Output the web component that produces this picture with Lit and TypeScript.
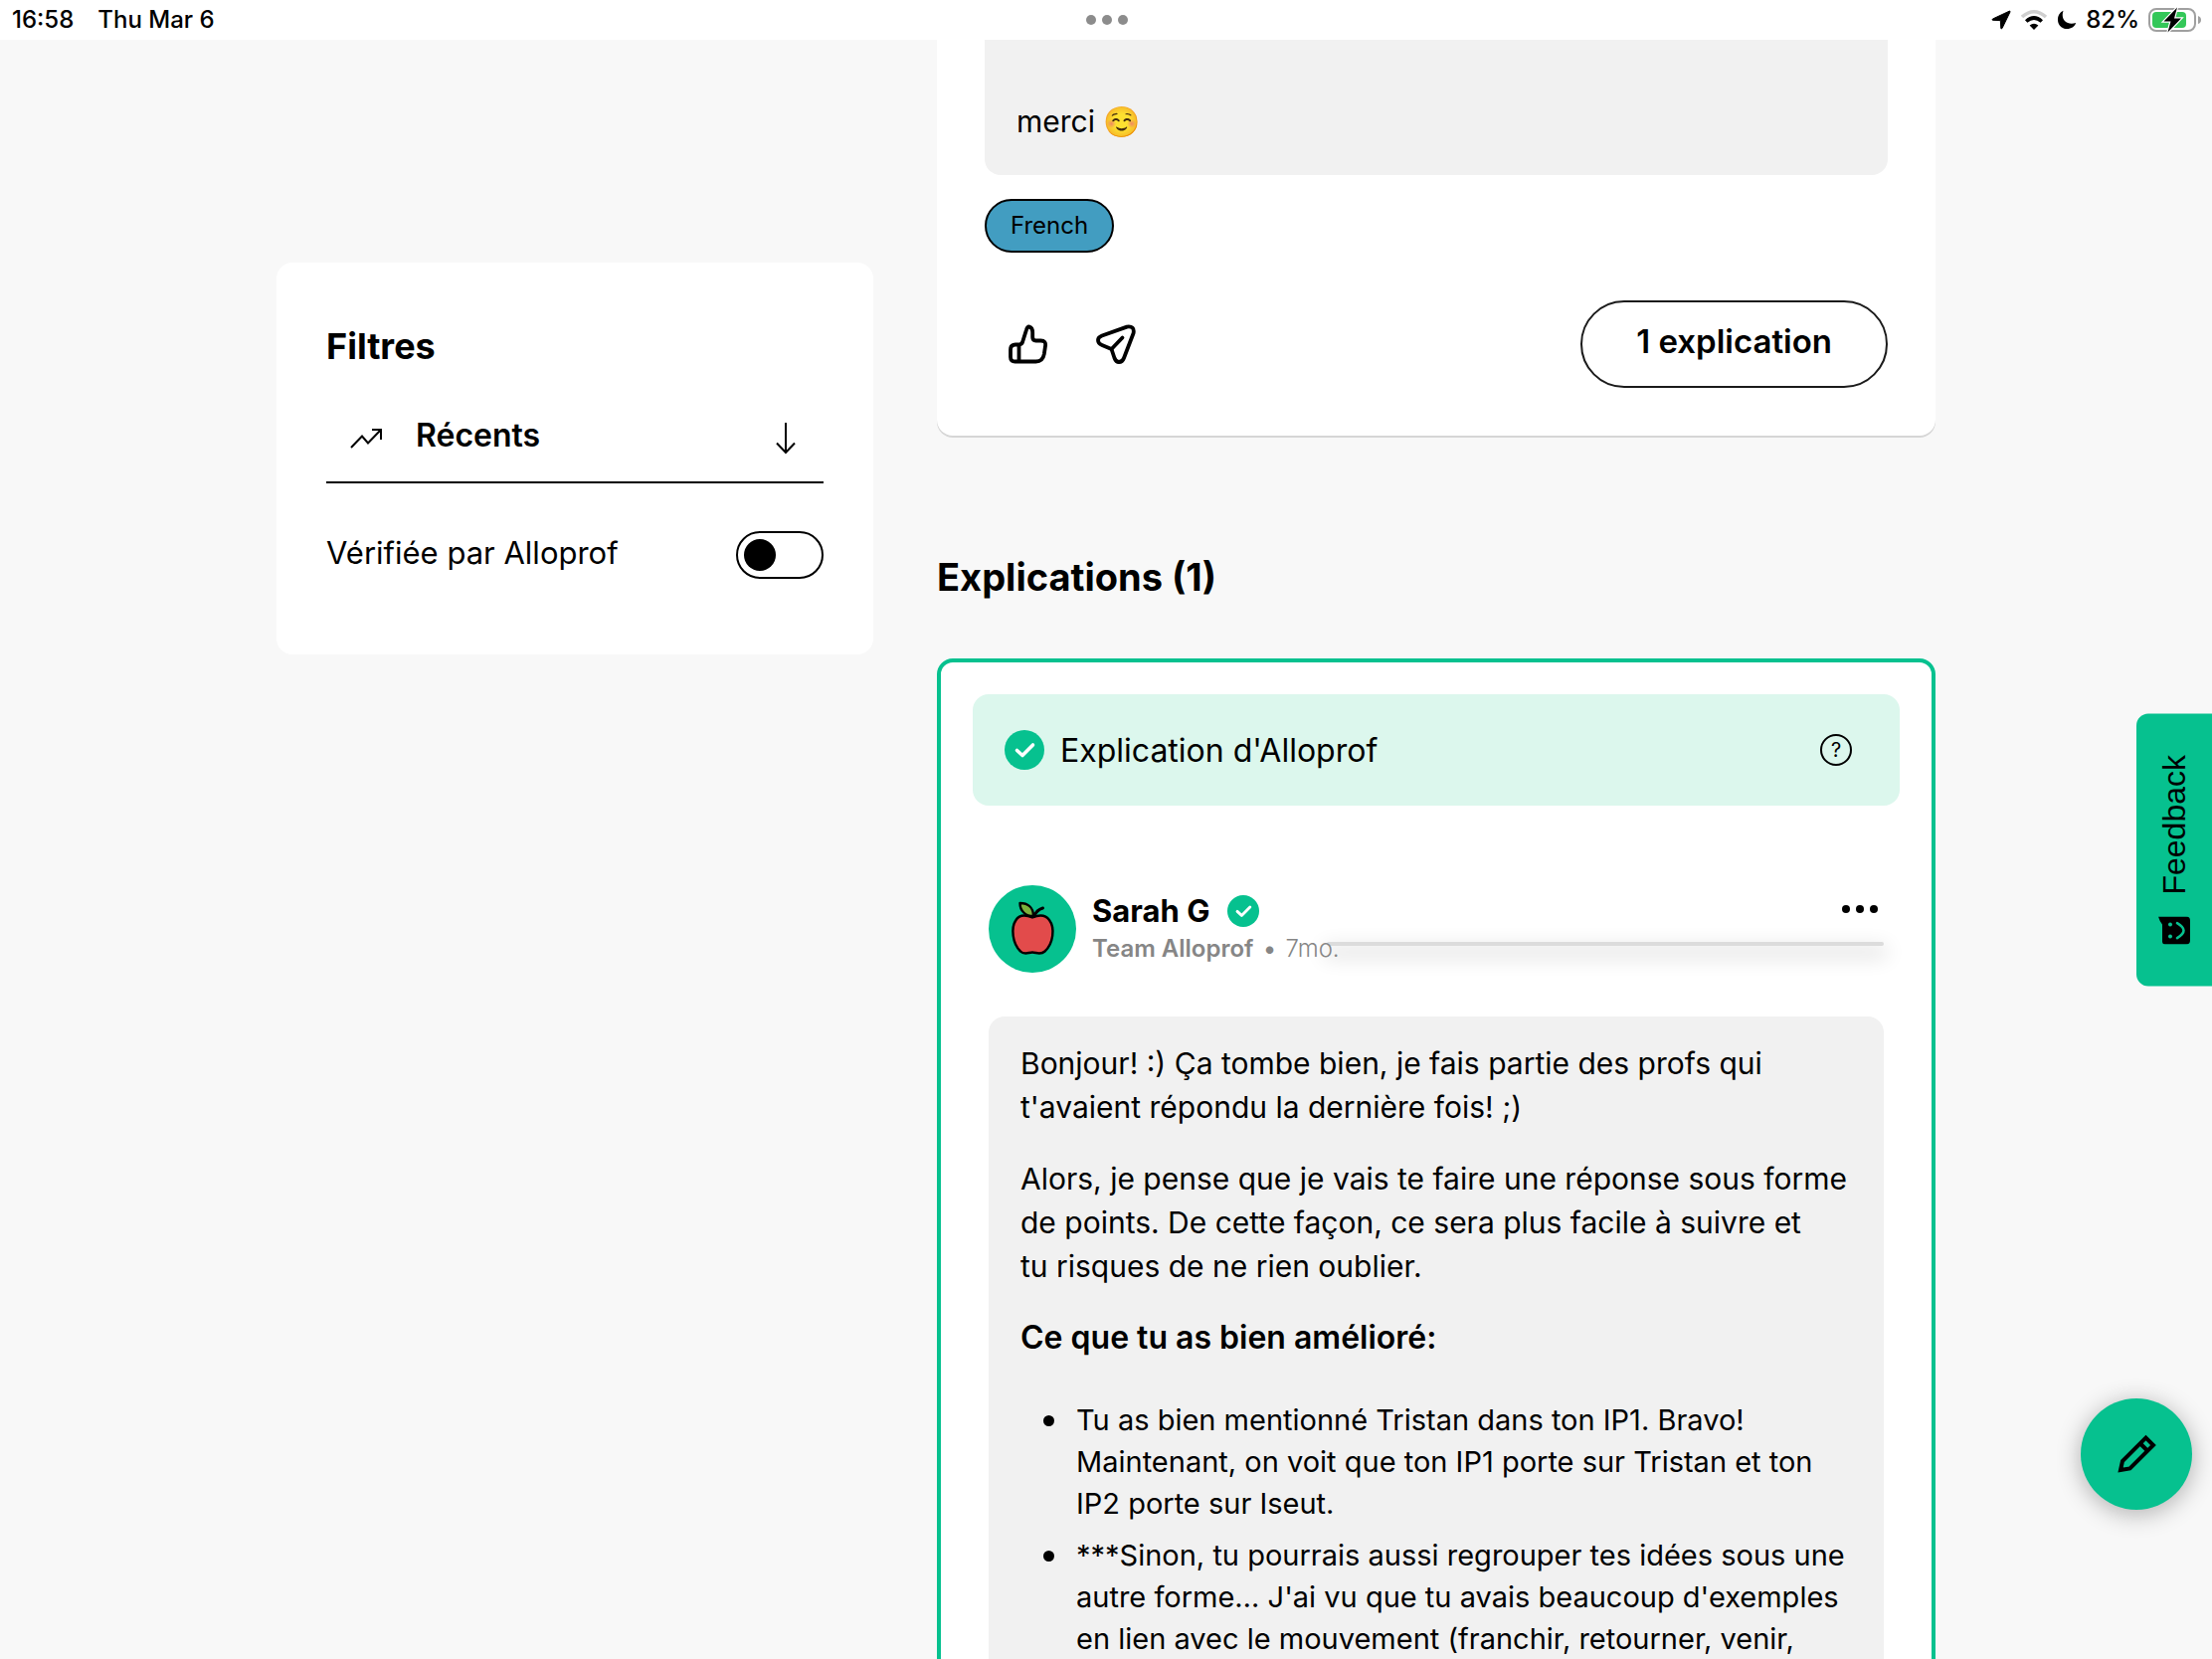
import { LitElement, html, css } from "lit";
import { customElement, state } from "lit/decorators.js";

const base = css`
  :host {
    display: block;
    box-sizing: border-box;
  }
  * {
    box-sizing: border-box;
  }
  h2,
  p,
  ul {
    margin: 0;
  }
  svg {
    display: block;
    flex: none;
  }
  button {
    margin: 0;
    padding: 0;
    border: 0;
    background: none;
    color: inherit;
    font: inherit;
    cursor: pointer;
  }
`;

const checkBadge = (size: number) => html`
  <svg width=${size} height=${size} viewBox="0 0 40 40" role="img" aria-label="Vérifié">
    <circle cx="20" cy="20" r="20" fill="#06c18f" />
    <path d="M12.500 20.500L18 25.500L28.500 15" fill="none" stroke="#fff" stroke-width="3.600" stroke-linecap="round" stroke-linejoin="round" />
  </svg>
`;

@customElement("status-bar")
class StatusBar extends LitElement {
  static styles = [
    base,
    css`
      .bar {
        display: grid;
        grid-template-columns: 1fr auto 1fr;
        align-items: center;
        height: 40px;
        padding: 0 10px 0 12px;
        background: #fff;
        font-size: 24px;
        font-weight: 500;
        line-height: 40px;
      }
      .side {
        display: flex;
        align-items: center;
        gap: 24px;
      }
      .end {
        justify-content: flex-end;
        gap: 9px;
      }
    `,
  ];

  render() {
    return html`
      <header class="bar">
        <div class="side"><span>16:58</span><span>Thu Mar 6</span></div>
        <svg width="42" height="10" viewBox="0 0 42 10" fill="#8c8c8c">
          <circle cx="5" cy="5" r="5" />
          <circle cx="21" cy="5" r="5" />
          <circle cx="37" cy="5" r="5" />
        </svg>
        <div class="side end">
          <svg width="20" height="20" viewBox="0 0 20 20">
            <path d="M18.200 1.200L1.500 9Q.4 9.800 1.600 10.300L9.300 10.600L9.800 18.400Q10.300 19.500 11 18.500L19 2Q19.300 .8 18.200 1.200Z" stroke="#000" stroke-linejoin="round" />
          </svg>
          <svg width="28" height="22" viewBox="0 0 28 22" fill="none" stroke-width="3.600">
            <path d="M2 8Q14-2.500 26 8" stroke="#cfcfcf" />
            <path d="M6.200 12.500Q14 5.500 21.800 12.500" stroke="#000" />
            <path d="M14 21L9.600 16.600Q14 12.800 18.400 16.600Z" fill="#000" />
          </svg>
          <svg width="20" height="20" viewBox="0 0 20 20">
            <path d="M6.500 .8C-.5 4 -.5 13.500 4.500 17.200C10 21 17.500 18.500 19.200 13C9.500 16 3.500 9 6.500 .8Z" />
          </svg>
          <span>82%</span>
          <svg width="54" height="26" viewBox="0 0 54 26">
            <rect x="1" y="2" width="46" height="22" rx="7" fill="none" stroke="#a0a0a0" stroke-width="2" />
            <path d="M50 9Q53 10 53 13Q53 16 50 17Z" fill="#a0a0a0" />
            <rect x="4" y="5" width="34" height="16" rx="4" fill="#34c759" />
            <path d="M29 .5L15.500 14.500H22.500L19.500 25.500L33 11.500H26Z" stroke="#fff" stroke-width="2.400" paint-order="stroke" />
          </svg>
        </div>
      </header>
    `;
  }
}

@customElement("filter-panel")
class FilterPanel extends LitElement {
  @state() private verifiedOnly = false;

  static styles = [
    base,
    css`
      .panel {
        padding: 62px 50px 76px;
        border-radius: 16px;
        background: #fff;
      }
      .title {
        font-size: 36px;
        font-weight: 700;
        line-height: 44px;
      }
      .sort {
        display: flex;
        align-items: center;
        margin-top: 32px;
        height: 84px;
        padding: 0 28px 4px 24px;
        border-bottom: 2px solid #000;
      }
      .select {
        flex: 1;
        min-width: 0;
        height: 44px;
        margin: 0 16px 8px 34px;
        padding: 0;
        border: 0;
        appearance: none;
        background: none;
        color: inherit;
        font: inherit;
        font-size: 32px;
        font-weight: 600;
      }
      .verified {
        display: flex;
        align-items: center;
        justify-content: space-between;
        margin-top: 48px;
        font-size: 31px;
        line-height: 44px;
      }
      .verified-text {
        padding-bottom: 4px;
      }
      .switch {
        display: flex;
        align-items: center;
        width: 88px;
        height: 48px;
        margin: 0;
        padding: 6px;
        border: 2px solid #000;
        border-radius: 24px;
        appearance: none;
        cursor: pointer;
      }
      .switch::before {
        content: "";
        width: 32px;
        height: 32px;
        border-radius: 50%;
        background: #000;
      }
      .switch:checked {
        justify-content: flex-end;
      }
    `,
  ];

  private toggle(event: Event) {
    this.verifiedOnly = (event.target as HTMLInputElement).checked;
  }

  render() {
    return html`
      <section class="panel">
        <h2 class="title">Filtres</h2>
        <div class="sort">
          <svg width="32" height="20" viewBox="0 0 32 20" fill="none" stroke="#000" stroke-width="2">
            <path d="M1 19L12 7.500L18 14.500L31 1M22 1H31V11" />
          </svg>
          <select class="select" aria-label="Trier">
            <option>Récents</option>
          </select>
          <svg width="20" height="32" viewBox="0 0 20 32" fill="none" stroke="#000" stroke-width="2">
            <path d="M10 0V30M1 20.500L10 30L19 20.500" />
          </svg>
        </div>
        <div class="verified">
          <label class="verified-text" for="verified">Vérifiée par Alloprof</label>
          <input class="switch" id="verified" type="checkbox" role="switch" .checked=${this.verifiedOnly} @change=${this.toggle} />
        </div>
      </section>
    `;
  }
}

@customElement("question-card")
class QuestionCard extends LitElement {
  static styles = [
    base,
    css`
      .card {
        padding: 0 48px 48px;
        border-radius: 0 0 16px 16px;
        background: #fff;
        box-shadow: 0 2px 0 #d6d6d6;
      }
      .message {
        padding: 60px 32px 32px;
        border-radius: 0 0 16px 16px;
        background: #f1f1f1;
        font-size: 30px;
        line-height: 44px;
      }
      .tag {
        display: inline-block;
        margin-top: 24px;
        padding: 1px 24px;
        border: 2px solid #000;
        border-radius: 27px;
        background: #429dc1;
        color: #000;
        font-size: 24px;
        line-height: 48px;
        text-decoration: none;
        vertical-align: top;
      }
      .actions {
        display: flex;
        align-items: center;
        gap: 48px;
        margin-top: 48px;
        padding-left: 24px;
      }
      .answers {
        margin-left: auto;
        height: 88px;
        padding: 0 54px 6px;
        border: 2px solid #1b1b1b;
        border-radius: 44px;
        font-size: 33px;
        font-weight: 600;
      }
    `,
  ];

  render() {
    return html`
      <article class="card">
        <p class="message">merci ☺️</p>
        <a class="tag" href="#french">French</a>
        <div class="actions">
          <button aria-label="J'aime">
            <svg width="40" height="40" viewBox="0 0 40 40" fill="none" stroke="#000" stroke-width="3.800" stroke-linejoin="round">
              <path d="M11 20.500Q13.500 20 14.200 17.500L18 5.500Q19 2 21 2.600Q24.200 3.500 24.200 8.500V13Q24.200 16.500 27.500 16.500H32.500Q38 16.500 37 22L35.800 30Q34.500 37.500 27.500 37.500H6.500Q2 37.500 2 33V25.500Q2 20.500 7 20.500Z" />
              <path d="M10.500 21V37" />
            </svg>
          </button>
          <button aria-label="Partager">
            <svg width="40" height="40" viewBox="0 0 40 40" fill="none" stroke="#000" stroke-width="3.800" stroke-linejoin="round" stroke-linecap="round">
              <path d="M6 11.500L31 2.600Q39 1.500 37.600 9L28 34Q26.500 38 23 38Q20 38 18.500 34L15.500 25L6 21Q2 19.500 2 16Q2 13 6 11.500Z" />
              <path d="M15.500 25L26.500 13.500" />
            </svg>
          </button>
          <button class="answers">1 explication</button>
        </div>
      </article>
    `;
  }
}

@customElement("explanation-card")
class ExplanationCard extends LitElement {
  static styles = [
    base,
    css`
      .card {
        min-height: 100%;
        padding: 32px;
        border: 4px solid #06c18f;
        border-radius: 16px;
        background: #fff;
      }
      .banner {
        display: flex;
        align-items: center;
        gap: 16px;
        height: 112px;
        padding: 0 48px 0 32px;
        border-radius: 16px;
        background: #dcf7ed;
        font-size: 32px;
      }
      .help {
        margin-left: auto;
        width: 32px;
        height: 32px;
        border: 2px solid #000;
        border-radius: 50%;
        font-size: 20px;
        line-height: 28px;
      }
      .body {
        padding: 80px 16px 0;
      }
      .author {
        position: relative;
        display: flex;
        align-items: center;
        gap: 16px;
        height: 88px;
      }
      .identity {
        position: relative;
        z-index: 1;
        flex: 1;
      }
      .name {
        display: flex;
        align-items: center;
        gap: 18px;
        font-size: 31px;
        font-weight: 700;
        line-height: 40px;
      }
      .meta {
        display: flex;
        gap: 10px;
        color: #868686;
        font-size: 24px;
        line-height: 36px;
      }
      .team {
        font-weight: 600;
      }
      .age {
        font-weight: 300;
      }
      .more {
        align-self: flex-start;
        padding: 20px 6px;
      }
      .rule {
        position: absolute;
        top: 57px;
        right: 0;
        left: 340px;
        height: 4px;
        border-radius: 2px;
        background: #dcdcdc;
        box-shadow: 0 8px 20px 4px rgba(0, 0, 0, 0.12);
      }
      .text {
        display: flex;
        flex-direction: column;
        gap: 28px;
        margin-top: 44px;
        padding: 25px 30px 32px 32px;
        border-radius: 16px;
        background: #f1f1f1;
        font-size: 30px;
        line-height: 44px;
      }
      .lead {
        font-size: 32px;
        font-weight: 600;
      }
      .points {
        display: flex;
        flex-direction: column;
        gap: 10px;
        margin-top: 12px;
        padding: 0;
        list-style: none;
        font-size: 29px;
        line-height: 42px;
      }
      .point {
        display: flex;
        gap: 22px;
        padding-left: 23px;
      }
      .point::before {
        content: "";
        flex: none;
        width: 11px;
        height: 11px;
        margin-top: 16px;
        border-radius: 50%;
        background: #000;
      }
    `,
  ];

  private apple() {
    return html`
      <svg width="88" height="88" viewBox="0 0 88 88" role="img" aria-label="Sarah G">
        <circle cx="44" cy="44" r="44" fill="#06c18f" />
        <path
          d="M44 32.500C38 30 31 29.500 27.500 35C22 43 24 59 32 66.500C36 70.500 40 67.500 44 67.500C48 67.500 52 70.500 56.500 66.500C65 59 67 43 61 35C57 29.500 50 30 44 32.500Z"
          fill="#e24b4b" stroke="#000" stroke-width="2.400" />
        <path d="M31.500 18C39 18 45 22 45 31C37 31 31.500 26 31.500 18Z" fill="#7cb13c" stroke="#000" stroke-width="2.400" stroke-linejoin="round" />
        <path d="M54.500 23Q48 25 46 31" fill="none" stroke="#000" stroke-width="3" stroke-linecap="round" />
      </svg>
    `;
  }

  render() {
    return html`
      <article class="card">
        <div class="banner">
          ${checkBadge(40)}
          <span>Explication d'Alloprof</span>
          <button class="help" aria-label="Aide">?</button>
        </div>
        <div class="body">
          <div class="author">
            <div class="rule"></div>
            ${this.apple()}
            <div class="identity">
              <div class="name">Sarah G ${checkBadge(32)}</div>
              <div class="meta">
                <span class="team">Team Alloprof</span>
                <span class="team">•</span>
                <span class="age">7mo.</span>
              </div>
            </div>
            <button class="more" aria-label="Options">
              <svg width="36" height="8" viewBox="0 0 36 8">
                <circle cx="4" cy="4" r="4" />
                <circle cx="18" cy="4" r="4" />
                <circle cx="32" cy="4" r="4" />
              </svg>
            </button>
          </div>
          <div class="text">
            <p>Bonjour! :) Ça tombe bien, je fais partie des profs qui t'avaient répondu la dernière fois! ;)</p>
            <p>
              Alors, je pense que je vais te faire une réponse sous forme de points. De cette façon, ce sera
              plus facile à suivre et<br />tu risques de ne rien oublier.
            </p>
            <p class="lead">Ce que tu as bien amélioré:</p>
            <ul class="points">
              <li class="point">
                <span>
                  Tu as bien mentionné Tristan dans ton IP1. Bravo!<br />Maintenant, on voit que ton IP1 porte sur
                  Tristan et ton IP2 porte sur Iseut.
                </span>
              </li>
              <li class="point">
                <span>
                  ***Sinon, tu pourrais aussi regrouper tes idées sous une autre forme… J'ai vu que tu avais
                  beaucoup d'exemples en lien avec le mouvement (franchir, retourner, venir,
                </span>
              </li>
            </ul>
          </div>
        </div>
      </article>
    `;
  }
}

@customElement("feedback-tab")
class FeedbackTab extends LitElement {
  static styles = [
    base,
    css`
      .tab {
        display: flex;
        align-items: center;
        gap: 22px;
        width: 76px;
        padding: 42px 0 41px;
        border-radius: 0 12px 12px 0;
        background: #06c18f;
        color: #000;
        font-family: "Liberation Sans", Arial, sans-serif;
        font-size: 32px;
        line-height: 36px;
        writing-mode: vertical-rl;
        transform: rotate(180deg);
      }
    `,
  ];

  render() {
    return html`
      <button class="tab">
        <svg width="32" height="28" viewBox="0 0 32 28">
          <path d="M4 0H25Q28 0 28 3V20Q31 24 32 28H4Q0 28 0 24V4Q0 0 4 0Z" />
          <circle cx="20" cy="8" r="2" fill="#06c18f" />
          <circle cx="20" cy="20" r="2" fill="#06c18f" />
          <path d="M13 6.500Q0 14 13 21.500" fill="none" stroke="#06c18f" stroke-width="2.600" stroke-linecap="round" />
        </svg>
        Feedback
      </button>
    `;
  }
}

@customElement("app-root")
class AppRoot extends LitElement {
  static styles = [
    base,
    css`
      :host {
        display: flex;
        flex-direction: column;
        height: 100vh;
        overflow: hidden;
        background: #f8f8f8;
        color: #000;
        font-family: Inter, "Liberation Sans", sans-serif;
      }
      .content {
        flex: 1;
        display: grid;
        grid-template-columns: minmax(0, 600fr) minmax(0, 1004fr);
        gap: 64px;
        width: 75%;
        min-height: 0;
        margin: 0 auto;
      }
      .filters {
        padding-top: 224px;
      }
      .thread {
        display: flex;
        flex-direction: column;
      }
      .heading {
        padding: 118px 0 58px;
        font-size: 38px;
        font-weight: 700;
        line-height: 48px;
      }
      .answer {
        flex: 1;
      }
      .feedback {
        position: fixed;
        top: 718px;
        right: 0;
      }
      .compose {
        position: fixed;
        right: 20px;
        bottom: 150px;
        display: flex;
        align-items: center;
        justify-content: center;
        width: 112px;
        height: 112px;
        border-radius: 50%;
        background: #06c18f;
        box-shadow: 0 4px 24px rgba(0, 0, 0, 0.3);
      }
    `,
  ];

  render() {
    return html`
      <status-bar></status-bar>
      <main class="content">
        <aside class="filters"><filter-panel></filter-panel></aside>
        <div class="thread">
          <question-card></question-card>
          <h2 class="heading">Explications (1)</h2>
          <explanation-card class="answer"></explanation-card>
        </div>
      </main>
      <feedback-tab class="feedback"></feedback-tab>
      <button class="compose" aria-label="Écrire">
        <svg width="40" height="40" viewBox="0 0 40 40" fill="none" stroke="#000" stroke-width="4">
          <path d="M4 36L6 27L29.500 3.500L37 11L13.500 34.500Z" />
          <path d="M23.500 9L31.500 17" />
        </svg>
      </button>
    `;
  }
}
